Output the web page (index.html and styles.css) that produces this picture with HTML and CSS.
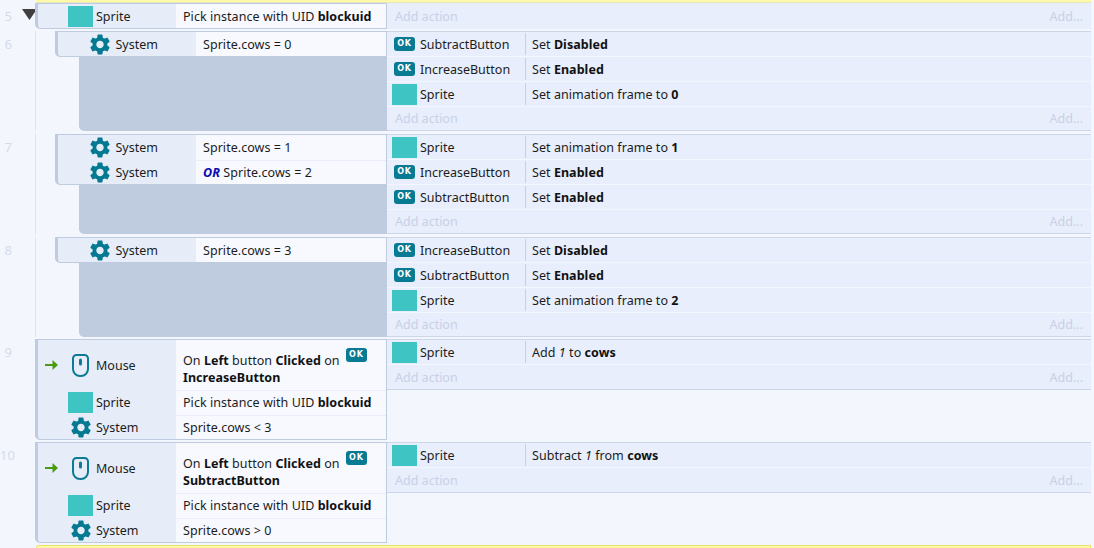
FILE: index.html
```html
<!DOCTYPE html>
<html lang="en">
<head>
<meta charset="utf-8">
<title>Event sheet</title>
<link rel="stylesheet" href="styles.css">
</head>
<body>
<svg class="defs" width="0" height="0" aria-hidden="true">
  <symbol id="gear" viewBox="2.4 1.8 19.2 20.4"><path fill-rule="evenodd" d="M19.14 12.94c.04-.3.06-.61.06-.94 0-.32-.02-.64-.07-.94l2.03-1.58a.49.49 0 0 0 .12-.61l-1.92-3.32a.488.488 0 0 0-.59-.22l-2.39.96c-.5-.38-1.03-.7-1.62-.94l-.36-2.54a.484.484 0 0 0-.48-.41h-3.84c-.24 0-.43.17-.47.41l-.36 2.54c-.59.24-1.13.57-1.62.94l-2.39-.96c-.22-.08-.47 0-.59.22L2.74 8.87c-.12.21-.08.47.12.61l2.03 1.58c-.05.3-.09.63-.09.94s.02.64.07.94l-2.03 1.58a.49.49 0 0 0-.12.61l1.92 3.32c.12.22.37.29.59.22l2.39-.96c.5.38 1.03.7 1.62.94l.36 2.54c.05.24.24.41.48.41h3.84c.24 0 .44-.17.47-.41l.36-2.54c.59-.24 1.13-.56 1.62-.94l2.39.96c.22.08.47 0 .59-.22l1.92-3.32c.12-.22.07-.47-.12-.61l-2.01-1.58zM12 15.6c-1.98 0-3.6-1.62-3.6-3.6s1.62-3.6 3.6-3.6 3.6 1.62 3.6 3.6-1.62 3.6-3.6 3.6z"/></symbol>
  <symbol id="mouse" viewBox="0 0 17 23"><path fill="none" stroke="currentColor" stroke-width="2" d="M4.5 1h8a3.500 3.500 0 0 1 3.500 3.500V15a7 7 0 0 1-7 7H8a7 7 0 0 1-7-7V4.500A3.500 3.500 0 0 1 4.500 1z"/><rect x="7" y="4.500" width="3" height="7" rx="1.500" fill="currentColor"/></symbol>
  <symbol id="arrow" viewBox="0 0 13 10"><path fill="currentColor" d="M0 4h7.500V0L13 5 7.500 10V6H0z"/></symbol>
</svg>

<div class="strip-top"></div>

<section class="event">
  <div class="num tree-none"><span class="digit">5</span><svg class="tri" width="15" height="11" viewBox="0 0 15 11"><path d="M0 0h15L7.500 11z"/></svg></div>
  <div class="conds">
    <div class="block">
      <div class="row"><div class="name"><span class="slot"><i class="sprite"></i></span><span>Sprite</span></div><div class="text">Pick instance with UID <b>blockuid</b></div></div>
    </div>
  </div>
  <div class="actions flat">
    <div class="row-a add"><span>Add action</span><span>Add...</span></div>
  </div>
</section>

<section class="event sub">
  <div class="num"><span class="digit">6</span></div>
  <div class="conds">
    <div class="block">
      <div class="row"><div class="name"><span class="slot"><svg class="gear"><use href="#gear"/></svg></span><span>System</span></div><div class="text">Sprite.cows = 0</div></div>
    </div>
    <div class="filler"></div>
  </div>
  <div class="actions">
    <div class="row-a"><div class="name"><span class="slot"><span class="ok">OK</span></span><span>SubtractButton</span></div><div class="text">Set <b>Disabled</b></div></div>
    <div class="row-a"><div class="name"><span class="slot"><span class="ok">OK</span></span><span>IncreaseButton</span></div><div class="text">Set <b>Enabled</b></div></div>
    <div class="row-a"><div class="name"><span class="slot"><i class="sprite"></i></span><span>Sprite</span></div><div class="text">Set animation frame to <b>0</b></div></div>
    <div class="row-a add"><span>Add action</span><span>Add...</span></div>
  </div>
</section>

<section class="event sub">
  <div class="num"><span class="digit">7</span></div>
  <div class="conds">
    <div class="block">
      <div class="row"><div class="name"><span class="slot"><svg class="gear"><use href="#gear"/></svg></span><span>System</span></div><div class="text">Sprite.cows = 1</div></div>
      <div class="row"><div class="name"><span class="slot"><svg class="gear"><use href="#gear"/></svg></span><span>System</span></div><div class="text"><em class="or">OR</em> Sprite.cows = 2</div></div>
    </div>
    <div class="filler"></div>
  </div>
  <div class="actions">
    <div class="row-a"><div class="name"><span class="slot"><i class="sprite"></i></span><span>Sprite</span></div><div class="text">Set animation frame to <b>1</b></div></div>
    <div class="row-a"><div class="name"><span class="slot"><span class="ok">OK</span></span><span>IncreaseButton</span></div><div class="text">Set <b>Enabled</b></div></div>
    <div class="row-a"><div class="name"><span class="slot"><span class="ok">OK</span></span><span>SubtractButton</span></div><div class="text">Set <b>Enabled</b></div></div>
    <div class="row-a add"><span>Add action</span><span>Add...</span></div>
  </div>
</section>

<section class="event sub tight">
  <div class="num"><span class="digit">8</span></div>
  <div class="conds">
    <div class="block">
      <div class="row"><div class="name"><span class="slot"><svg class="gear"><use href="#gear"/></svg></span><span>System</span></div><div class="text">Sprite.cows = 3</div></div>
    </div>
    <div class="filler"></div>
  </div>
  <div class="actions">
    <div class="row-a"><div class="name"><span class="slot"><span class="ok">OK</span></span><span>IncreaseButton</span></div><div class="text">Set <b>Disabled</b></div></div>
    <div class="row-a"><div class="name"><span class="slot"><span class="ok">OK</span></span><span>SubtractButton</span></div><div class="text">Set <b>Enabled</b></div></div>
    <div class="row-a"><div class="name"><span class="slot"><i class="sprite"></i></span><span>Sprite</span></div><div class="text">Set animation frame to <b>2</b></div></div>
    <div class="row-a add"><span>Add action</span><span>Add...</span></div>
  </div>
</section>

<section class="event">
  <div class="num tree-none"><span class="digit">9</span></div>
  <div class="conds">
    <div class="block">
      <div class="row trigger"><div class="name trig"><svg class="arrow"><use href="#arrow"/></svg><span class="slot"><svg class="mouse"><use href="#mouse"/></svg></span><span>Mouse</span></div><div class="text wrap">On <b>Left</b> button <b>Clicked</b> on <span class="ok inline">OK</span><br><b>IncreaseButton</b></div></div>
      <div class="row"><div class="name"><span class="slot"><i class="sprite"></i></span><span>Sprite</span></div><div class="text">Pick instance with UID <b>blockuid</b></div></div>
      <div class="row"><div class="name"><span class="slot"><svg class="gear"><use href="#gear"/></svg></span><span>System</span></div><div class="text">Sprite.cows &lt; 3</div></div>
    </div>
  </div>
  <div class="actions short">
    <div class="row-a"><div class="name"><span class="slot"><i class="sprite"></i></span><span>Sprite</span></div><div class="text">Add <em>1</em> to <b>cows</b></div></div>
    <div class="row-a add"><span>Add action</span><span>Add...</span></div>
  </div>
</section>

<section class="event">
  <div class="num tree-none"><span class="digit">10</span></div>
  <div class="conds">
    <div class="block">
      <div class="row trigger"><div class="name trig"><svg class="arrow"><use href="#arrow"/></svg><span class="slot"><svg class="mouse"><use href="#mouse"/></svg></span><span>Mouse</span></div><div class="text wrap">On <b>Left</b> button <b>Clicked</b> on <span class="ok inline">OK</span><br><b>SubtractButton</b></div></div>
      <div class="row"><div class="name"><span class="slot"><i class="sprite"></i></span><span>Sprite</span></div><div class="text">Pick instance with UID <b>blockuid</b></div></div>
      <div class="row"><div class="name"><span class="slot"><svg class="gear"><use href="#gear"/></svg></span><span>System</span></div><div class="text">Sprite.cows &gt; 0</div></div>
    </div>
  </div>
  <div class="actions short">
    <div class="row-a"><div class="name"><span class="slot"><i class="sprite"></i></span><span>Sprite</span></div><div class="text">Subtract <em>1</em> from <b>cows</b></div></div>
    <div class="row-a add"><span>Add action</span><span>Add...</span></div>
  </div>
</section>

<div class="strip-bottom"></div>
</body>
</html>
```
FILE: styles.css
```css
* { box-sizing: border-box; }
html, body { margin: 0; height: 100%; }
body {
  width: 1094px;
  height: 548px;
  overflow: hidden;
  background: #f4f6fd;
  color: #1c1c1c;
  font: 12.5px/17px "Noto Sans", "Open Sans", sans-serif;
}
.defs { position: absolute; }
.strip-top {
  height: 3px;
  margin: 0 3px 0 36px;
  background: #fdf9a8;
  border-bottom: 1px solid #e4e6c0;
}
.strip-bottom {
  height: 3px;
  margin: 0 3px 0 36px;
  background: #fdf9a8;
  border: 1px solid #e8e36c;
  border-bottom: 0;
  border-radius: 4px 0 0 0;
}
.event {
  display: grid;
  grid-template-columns: 36px 351px 704px;
  margin-bottom: 2px;
}
.event.sub { margin-bottom: 3px; }
.event.sub.tight { margin-bottom: 2px; }
.num {
  display: flex;
  align-items: flex-start;
  gap: 10px;
  padding-top: 5px;
  border-right: 1px solid #dfe4f0;
  color: #d3dbe9;
  font-size: 13px;
}
.num.tree-none { border-right: 0; }
.digit { width: 12px; text-align: right; white-space: nowrap; }
.tri { flex: none; margin-top: 1px; fill: #3f3f3f; margin-right: -3px; }
.conds { display: flex; flex-direction: column; }
.sub .conds { padding-left: 19px; }
.block {
  border: 1px solid #bfcbdf;
  border-left-width: 3px;
  border-radius: 0 0 0 5px;
  overflow: hidden;
  background: #e6edf9;
  margin-left: -1px;
}
.sub .block { margin-left: 0; }
.filler {
  flex: 1;
  margin-left: 24px;
  background: #bfcbdf;
  border-radius: 0 0 0 5px;
}
.row { display: flex; height: 25px; }
.row:last-child { height: 24px; }
.row + .row .text { border-top: 1px solid #e8edf9; }
.row.trigger { height: 50px; }
.name {
  flex: none;
  width: 138px;
  display: flex;
  align-items: center;
  padding-left: 30px;
  white-space: nowrap;
}
.name.trig { padding-left: 7px; }
.sub .conds .name { padding-left: 29.5px; }
.slot { flex: none; width: 25px; margin-right: 3px; display: flex; align-items: center; justify-content: center; }
.text {
  flex: 1;
  padding-left: 7px;
  background: #f7f9ff;
  white-space: nowrap;
  line-height: 24px;
  letter-spacing: .05px;
}
.row:first-child .text { line-height: 26px; }
.row:first-child .text.wrap { line-height: 17px; padding-top: 12px; }
b { font-weight: 700; color: #111; }
em { font-style: italic; }
.or { color: #0a0ab0; font-weight: 700; }
.sprite { display: block; width: 25px; height: 21px; background: #3dc4c3; }
.gear { display: block; width: 20px; height: 21px; fill: #047a92; }
.mouse { display: block; width: 17px; height: 23px; color: #0f7a93; }
.arrow { flex: none; width: 13px; height: 10px; margin-right: 10px; color: #4a9a12; }
.ok {
  display: inline-block;
  width: 21px;
  height: 14px;
  border-radius: 3px;
  background: #087a93;
  color: #fff;
  font: 700 8px/14px "DejaVu Sans", sans-serif;
  letter-spacing: .8px;
  text-align: center;
}
.ok.inline { position: relative; top: -4px; margin-left: 3px; vertical-align: top; }
.actions {
  background: #e8eefb;
  border-top: 1px solid #cdd6e8;
  border-bottom: 1px solid #cdd6e8;
}
.actions.flat { border-top: 0; border-bottom: 0; }
.actions.short { align-self: start; }
.row-a {
  display: flex;
  height: 25px;
  border-bottom: 1px solid #f3f6fd;
}
.row-a:last-child { height: 24px; border-bottom: 0; }
.sub .row-a:last-child { height: 23px; }
.flat .row-a:last-child { height: 26px; }
.row-a .name { width: 138px; padding-left: 5px; }
.row-a .text {
  background: none;
  border-left: 1px solid #c5d0e3;
  margin: 1px 0;
  padding-left: 6px;
  line-height: 24px;
}
.add {
  align-items: center;
  justify-content: space-between;
  padding: 0 8px;
  color: #c7d1e7;
}
```
